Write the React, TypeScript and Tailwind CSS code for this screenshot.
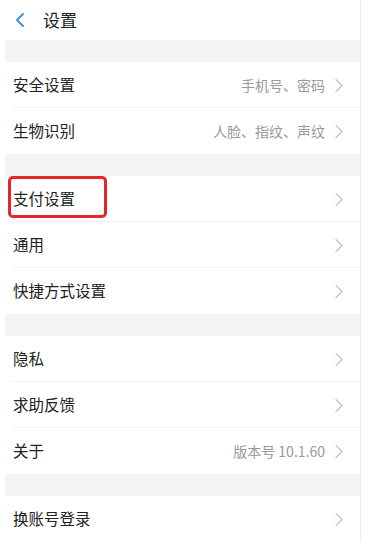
import React from 'react';

type Item = { label: string; value?: string };

const groups: Item[][] = [
  [
    { label: '安全设置', value: '手机号、密码' },
    { label: '生物识别', value: '人脸、指纹、声纹' },
  ],
  [{ label: '支付设置' }, { label: '通用' }, { label: '快捷方式设置' }],
  [{ label: '隐私' }, { label: '求助反馈' }, { label: '关于', value: '版本号 10.1.60' }],
  [{ label: '换账号登录' }],
];

function Chevron() {
  return (
    <svg width="8" height="15" viewBox="0 0 8 15" fill="none" className="shrink-0">
      <path d="M1 1.5l6 6-6 6" stroke="#c6c6c6" strokeWidth="1.3" strokeLinecap="round" strokeLinejoin="round" />
    </svg>
  );
}

function Row({ item, last }: { item: Item; last: boolean }) {
  return (
    <div className="relative flex h-[46px] items-center bg-white pl-[8px] pr-[17px]">
      <span className="flex-1 text-[15.5px] text-[#222]">{item.label}</span>
      {item.value && <span className="mr-[10px] text-[14px] text-[#9a9a9a]">{item.value}</span>}
      <Chevron />
      {!last && <div className="absolute bottom-0 left-[7px] right-0 h-px bg-[#f1f1f1]" />}
    </div>
  );
}

export default function App() {
  return (
    <div className="h-[549px] w-[367px] overflow-hidden bg-white" style={{ fontFamily: '"Noto Sans CJK SC", "Noto Sans", sans-serif' }}>
      <div className="ml-[5px] w-[356px] border-r border-[#ededed]">
        {/* Header */}
        <div className="flex h-[40px] items-center bg-white pl-[10px]">
          <svg width="10" height="14" viewBox="0 0 10 14" fill="none">
            <path d="M8 1L2 7l6 6" stroke="#3a8ee6" strokeWidth="1.8" strokeLinecap="round" strokeLinejoin="round" />
          </svg>
          <span className="ml-[18px] text-[17px] text-[#222]">设置</span>
        </div>

        {groups.map((group, gi) => (
          <div key={gi}>
            <div className="h-[22px] bg-[#f4f4f4]" />
            {group.map((item, i) => (
              <div key={item.label} className="relative">
                <Row item={item} last={i === group.length - 1} />
                {item.label === '支付设置' && (
                  <div className="pointer-events-none absolute left-[3px] top-0 h-[42px] w-[99px] rounded-[5px] border-[3px] border-[#e3262a]" />
                )}
              </div>
            ))}
          </div>
        ))}
      </div>
    </div>
  );
}
